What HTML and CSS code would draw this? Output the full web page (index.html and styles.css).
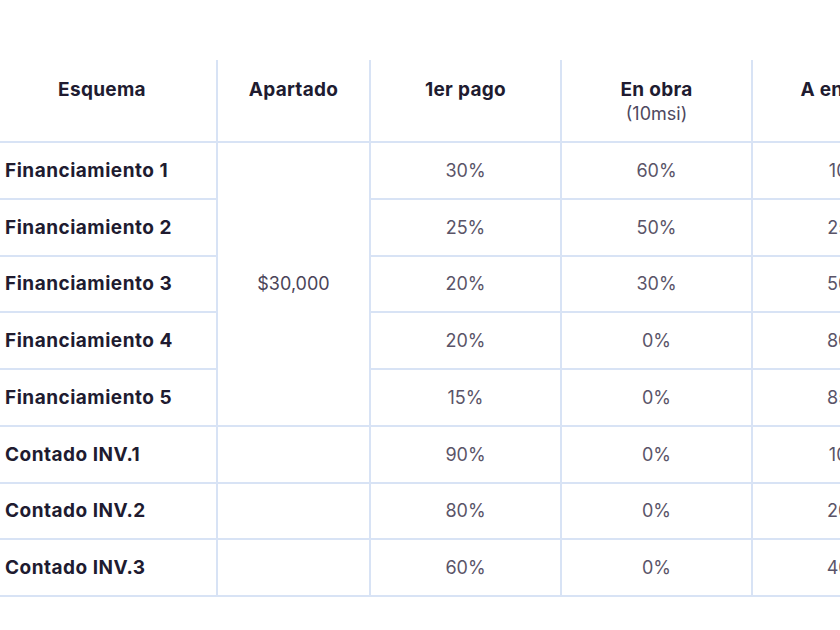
FILE: index.html
```html
<!DOCTYPE html>
<html lang="es">
<head>
<meta charset="utf-8">
<link rel="stylesheet" href="styles.css">
</head>
<body>
<div class="wrap">
<table class="plans">
  <colgroup>
    <col class="c1"><col class="c2"><col class="c3"><col class="c4"><col class="c5">
  </colgroup>
  <thead>
    <tr>
      <th class="first">Esquema</th>
      <th>Apartado</th>
      <th>1er pago</th>
      <th>En obra<span class="sub">(10msi)</span></th>
      <th>A entrega</th>
    </tr>
  </thead>
  <tbody>
    <tr><td class="name">Financiamiento 1</td><td class="dep" rowspan="5">$30,000</td><td>30%</td><td>60%</td><td>10%</td></tr>
    <tr><td class="name">Financiamiento 2</td><td>25%</td><td>50%</td><td>25%</td></tr>
    <tr><td class="name">Financiamiento 3</td><td>20%</td><td>30%</td><td>50%</td></tr>
    <tr><td class="name">Financiamiento 4</td><td>20%</td><td>0%</td><td>80%</td></tr>
    <tr><td class="name">Financiamiento 5</td><td>15%</td><td>0%</td><td>85%</td></tr>
    <tr><td class="name">Contado INV.1</td><td></td><td>90%</td><td>0%</td><td>10%</td></tr>
    <tr><td class="name">Contado INV.2</td><td></td><td>80%</td><td>0%</td><td>20%</td></tr>
    <tr><td class="name">Contado INV.3</td><td></td><td>60%</td><td>0%</td><td>40%</td></tr>
  </tbody>
</table>
</div>
</body>
</html>
```

FILE: styles.css
```css
html, body {
  margin: 0;
  padding: 0;
  background: #ffffff;
  overflow: hidden;
}
body {
  width: 840px;
  height: 630px;
  font-family: "Inter", "Noto Sans", sans-serif;
}
.wrap {
  padding-top: 60px;
  width: 1000px;
}
.plans {
  border-collapse: collapse;
  table-layout: fixed;
  width: 942px;
}
.c1 { width: 217px; }
.c2 { width: 153px; }
.c3 { width: 191px; }
.c4 { width: 191px; }
.c5 { width: 190px; }
.plans th,
.plans td {
  border: 2px solid #d8e3f5;
  text-align: center;
  padding: 0;
}
.plans tr > :first-child { border-left: none; }
.plans thead th { border-top: none; }
.plans th {
  height: 63px;
  vertical-align: top;
  padding-top: 18px;
  font-size: 19px;
  font-weight: 700;
  color: #201b30;
  line-height: 24px;
  letter-spacing: 0.3px;
}
.plans th.first { padding-right: 12px; }
.sub {
  display: block;
  font-size: 18px;
  font-weight: 400;
  letter-spacing: 0;
  color: #4e4860;
}
.plans td {
  height: 54.75px;
  font-size: 18px;
  color: #5a5468;
  font-weight: 400;
  letter-spacing: 0;
}
.plans td.name {
  text-align: left;
  padding-left: 5px;
  font-size: 19px;
  font-weight: 700;
  letter-spacing: 0.5px;
  color: #201b30;
}
.plans td.dep {
  color: #4a4458;
}
```
